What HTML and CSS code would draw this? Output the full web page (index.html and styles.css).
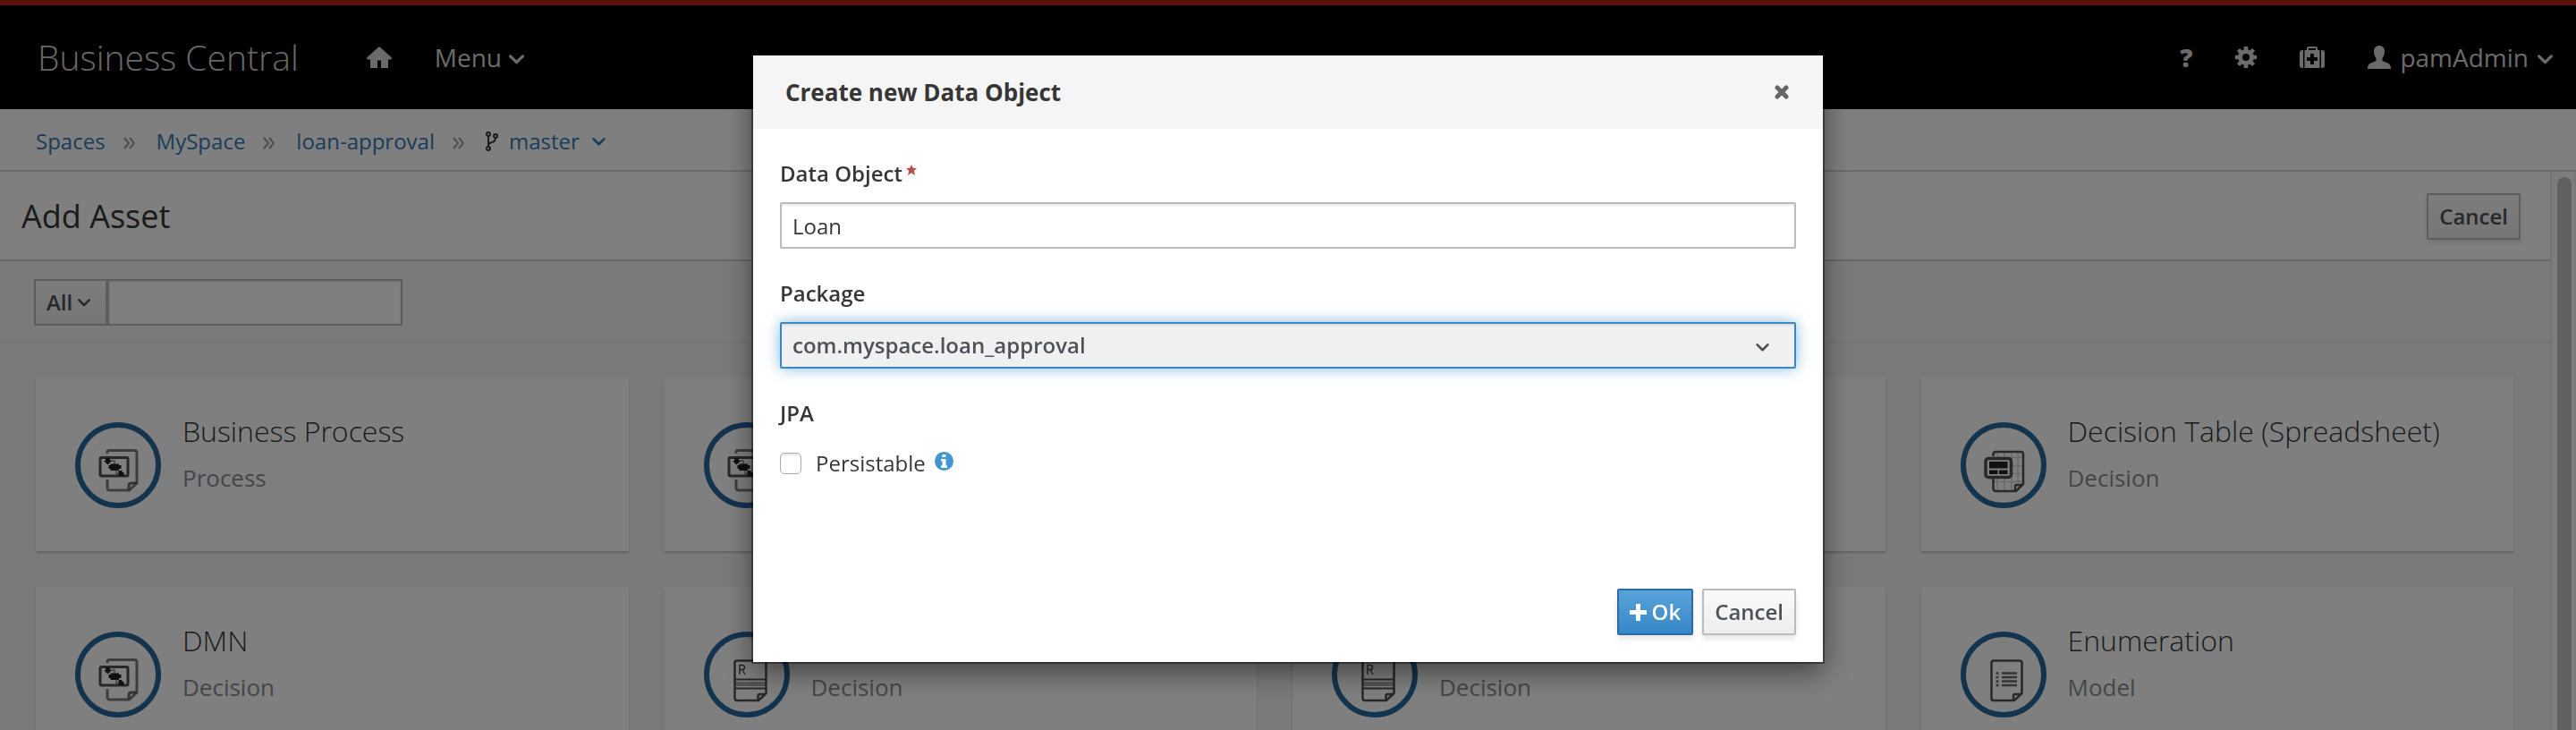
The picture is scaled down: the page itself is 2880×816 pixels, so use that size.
FILE: index.html
```html
<!DOCTYPE html>
<html lang="en">
<head>
<meta charset="utf-8">
<title>Business Central</title>
<link rel="stylesheet" href="styles.css">
</head>
<body>
<svg class="sprite" aria-hidden="true">
  <symbol id="chevron" viewBox="0 0 16 10"><path d="M1.500 1.500 8 8 14.500 1.500" fill="none" stroke="currentColor" stroke-width="3" stroke-linecap="round" stroke-linejoin="round"/></symbol>
  <symbol id="raquo" viewBox="0 0 13 14"><path d="M1 1 6 7 1 13M7 1 12 7 7 13" fill="none" stroke="currentColor" stroke-width="2"/></symbol>
  <symbol id="process" viewBox="0 0 48 52">
    <g fill="none" stroke="currentColor" stroke-width="3">
      <path d="M12 7V5.500Q12 3.500 14 3.500H42Q45 3.500 45 6V40L36.500 48H15Q12 48 12 45V36" opacity=".75"/>
      <rect x="4" y="11.500" width="31" height="20.500" rx="1.500"/>
      <path d="M36 47V43Q36 40 39 40H45" opacity=".85"/>
      <path d="M12 15H20V19M22 25V29.500H27" stroke-width="1.500" opacity=".7"/>
    </g>
    <path fill="#222" d="M10 12h5v3h2l-4.500 4.500L8 15h2zM13.500 20h2v-1.500H25V20h2.500v4H25v2h-9.500v-2h-2zM24.500 26h4v2h2v4h-6z"/>
  </symbol>
  <symbol id="sheet" viewBox="0 0 48 52">
    <path d="M11 11.500H45M11 20.500H45M11 29.500H45M11 38.500H45M17 4V48M25 4V48M33 4V48M40 4V40" fill="none" stroke="currentColor" stroke-width="1.500" opacity=".25"/>
    <path d="M12.500 10V8Q12.500 5 15.500 5H43Q46 5 46 8V41L38 49H15.500Q12.500 49 12.500 46V35" fill="none" stroke="currentColor" stroke-width="2.500"/>
    <path d="M37 48V44Q37 42 39 42H45" fill="none" stroke="currentColor" stroke-width="2.500"/>
    <rect x="4" y="12.500" width="28.500" height="21" rx="3" fill="#fff" stroke="currentColor" stroke-width="3.500"/>
    <path fill="#222" d="M8 16h20.500v7.500H8zM8 25.500h9.500v4.500H8zM19 25.500h9.500v4.500H19z"/>
  </symbol>
  <symbol id="rule" viewBox="0 0 48 52">
    <g fill="none" stroke="currentColor" stroke-width="2.500">
      <path d="M37 49H13Q10.500 49 10.500 46.500V7Q10.500 4.500 13 4.500H43Q45.500 4.500 45.500 7V41Z"/>
      <path d="M36.500 48V44Q36.500 42 38.500 42H45"/>
      <path d="M11 25.500H45M11 35.500H45" stroke-width="2"/>
      <path d="M11 30.500H45" stroke-width="5" opacity=".5"/>
      <path d="M16 20V9.500H19Q21.500 9.500 21.500 12Q21.500 14.500 19 14.500H16M19 14.500 22 20" stroke-width="1.500"/>
    </g>
  </symbol>
  <symbol id="enum" viewBox="0 0 48 52">
    <g fill="none" stroke="currentColor" stroke-width="2.500">
      <path d="M36 49H12.500Q10.500 49 10.500 46.500V7Q10.500 4.500 13 4.500H41.500Q44.500 4.500 44.500 7V41Z"/>
      <path d="M35 48V44Q35 42 37 42H44"/>
      <path d="M22 18.500H39M22 23H39M22 27.500H39M22 32H39" stroke-width="2.500" opacity=".85"/>
      <path d="M15.500 18.500H18.500M15.500 23H18.500M15.500 27.500H18.500M15.500 32H18.500" stroke-width="2.500" opacity=".85"/>
    </g>
  </symbol>
</svg>

<header class="masthead">
  <a class="brand" href="#">Business Central</a>
  <nav class="masthead-nav">
    <button class="nav-btn" aria-label="Home"><svg width="28" height="24" viewBox="0 0 28 24"><path fill="currentColor" d="M14 0 28 12.500 27 14.500H24V24H16V15.500H12V24H4V14.500H1L0 12.500Z"/></svg></button>
    <button class="nav-btn">Menu<svg class="caret" width="17" height="11"><use href="#chevron"/></svg></button>
  </nav>
  <div class="masthead-tools">
    <button class="nav-btn help" aria-label="Help">?</button>
    <button class="nav-btn" aria-label="Settings"><svg width="24" height="24" viewBox="0 0 24 24"><circle cx="12" cy="12" r="6.500" fill="none" stroke="currentColor" stroke-width="5"/><path d="M12 0V5M12 19V24M0 12H5M19 12H24M3.500 3.500 7 7M17 17 20.500 20.500M3.500 20.500 7 17M17 7 20.500 3.500" stroke="currentColor" stroke-width="4.500"/></svg></button>
    <button class="nav-btn" aria-label="Support"><svg width="28" height="24" viewBox="0 0 28 24"><path fill="currentColor" fill-rule="evenodd" d="M3 4H4V24H3Q0 24 0 21V7Q0 4 3 4ZM25 4H24V24H25Q28 24 28 21V7Q28 4 25 4ZM5.500 4H8V2Q8 0 10 0H18Q20 0 20 2V4H22.500V24H5.500ZM10 4H18V2H10ZM12 8V12H8V16H12V20H16V16H20V12H16V8Z"/></svg></button>
    <button class="nav-btn user"><svg width="26" height="26" viewBox="0 0 26 26"><path fill="currentColor" d="M13 0C17 0 19 3 19 7c0 3-1.200 5-2.500 7v3l6 2.500Q26 21 26 26H0q0-5 3.500-6.500L9.500 17v-3C8.200 12 7 10 7 7c0-4 2-7 6-7"/></svg>pamAdmin<svg class="caret" width="17" height="11"><use href="#chevron"/></svg></button>
  </div>
</header>

<nav class="crumbs" aria-label="Breadcrumb">
  <a href="#">Spaces</a><svg class="sep" width="13" height="14"><use href="#raquo"/></svg>
  <a href="#">MySpace</a><svg class="sep" width="13" height="14"><use href="#raquo"/></svg>
  <a href="#">loan-approval</a><svg class="sep" width="13" height="14"><use href="#raquo"/></svg>
  <svg class="branch" width="14" height="22" viewBox="0 0 14 22"><g fill="none" stroke="currentColor" stroke-width="2"><circle cx="3" cy="3" r="2"/><circle cx="3" cy="19" r="2"/><circle cx="11" cy="5" r="2"/><path d="M3 5V17M11 7Q11 11 7 12 3 13 3 16"/></g></svg>
  <a href="#" class="branch-link">master<svg width="15" height="9"><use href="#chevron"/></svg></a>
</nav>

<div class="workspace">
  <main class="content">
    <div class="titlebar">
      <h1>Add Asset</h1>
      <button class="btn">Cancel</button>
    </div>
    <div class="toolbar">
      <button class="filter">All<svg width="14" height="9"><use href="#chevron"/></svg></button>
      <input class="search" type="text" aria-label="Filter assets">
    </div>
    <section class="cards">
      <article class="card"><span class="ring"><svg width="48" height="52"><use href="#process"/></svg></span><div><h2>Business Process</h2><p>Process</p></div></article>
      <article class="card"><span class="ring"><svg width="48" height="52"><use href="#process"/></svg></span></article>
      <article class="card"></article>
      <article class="card"><span class="ring"><svg width="48" height="52"><use href="#sheet"/></svg></span><div><h2>Decision Table (Spreadsheet)</h2><p>Decision</p></div></article>
      <article class="card"><span class="ring"><svg width="48" height="52"><use href="#process"/></svg></span><div><h2>DMN</h2><p>Decision</p></div></article>
      <article class="card"><span class="ring"><svg width="48" height="52"><use href="#rule"/></svg></span><div><h2>&nbsp;</h2><p>Decision</p></div></article>
      <article class="card"><span class="ring"><svg width="48" height="52"><use href="#rule"/></svg></span><div><h2>&nbsp;</h2><p>Decision</p></div></article>
      <article class="card"><span class="ring"><svg width="48" height="52"><use href="#enum"/></svg></span><div><h2>Enumeration</h2><p>Model</p></div></article>
    </section>
  </main>
  <div class="scrollbar"><div class="thumb"></div></div>
</div>

<div class="backdrop">
  <section class="modal" role="dialog" aria-labelledby="dlg-title">
    <header class="modal-head">
      <h2 id="dlg-title">Create new Data Object</h2>
      <button class="close" aria-label="Close"><svg width="16" height="16" viewBox="0 0 16 16"><path d="M3 3 13 13M13 3 3 13" stroke="currentColor" stroke-width="5" stroke-linecap="round"/></svg></button>
    </header>
    <form class="modal-body">
      <div class="field">
        <label for="name">Data Object<svg class="required" width="12" height="12" viewBox="0 0 12 12"><path fill="currentColor" d="M6 0 7.800 3.800 12 4 8.800 7 10 12 6 9.300 2 12 3.200 7 0 4 4.200 3.800Z"/></svg></label>
        <input id="name" type="text" value="Loan">
      </div>
      <div class="field">
        <label for="package">Package</label>
        <div class="select">
          <select id="package"><option>com.myspace.loan_approval</option></select>
          <svg width="15" height="9"><use href="#chevron"/></svg>
        </div>
      </div>
      <fieldset>
        <legend>JPA</legend>
        <div class="check">
          <input type="checkbox" id="persist"><label for="persist">Persistable</label>
          <svg class="info" width="21" height="21" viewBox="0 0 21 21"><circle cx="10.500" cy="10.500" r="10.500" fill="#4297d0"/><path fill="#fff" d="M8.500 3h4v3h-4zM7 8h5.500v7.500H14V18H7v-2.500h1.500v-5H7z"/></svg>
        </div>
      </fieldset>
    </form>
    <footer class="modal-foot">
      <button class="btn primary"><svg width="19" height="19" viewBox="0 0 19 19"><path fill="currentColor" d="M7 0h5v7h7v5h-7v7H7v-7H0V7h7z"/></svg>Ok</button>
      <button class="btn">Cancel</button>
    </footer>
  </section>
</div>
</body>
</html>
```
FILE: styles.css
```css
* { box-sizing: border-box; }

body {
  margin: 0;
  height: 100vh;
  display: flex;
  flex-direction: column;
  overflow: hidden;
  background: #fff;
  color: #363636;
  font: 24px/40px "Open Sans", "Noto Sans", sans-serif;
}

button, input, select { font: inherit; color: inherit; }
button { margin: 0; cursor: pointer; }
h1, h2, p { margin: 0; font-weight: 400; }
a { color: #3678b4; text-decoration: none; }
svg { flex: none; }
.sprite { display: none; }

/* Masthead */
.masthead {
  flex: none;
  display: flex;
  align-items: center;
  height: 122px;
  padding: 0 26px 0 42px;
  border-top: 6px solid #bb2518;
  background: #000;
  color: #d6d6d6;
}
.brand { color: #d1d1d1; font-size: 39px; font-weight: 300; }
.masthead-nav { display: flex; gap: 48px; margin-left: 76px; }
.masthead-tools { display: flex; gap: 48px; margin-left: auto; }
.nav-btn {
  display: flex;
  align-items: center;
  gap: 8px;
  padding: 0;
  border: 0;
  background: none;
  font-size: 28px;
}
.caret { margin-top: 4px; }
.help { font-weight: 800; }
.user { gap: 10px; }

/* Breadcrumb */
.crumbs {
  flex: none;
  display: flex;
  align-items: center;
  height: 70px;
  padding: 4px 40px 0;
  border-bottom: 2px solid #d6d6d6;
}
.sep { margin: 4px 24px 0 20px; color: #9c9c9c; }
.branch { margin-right: 12px; }
.branch-link { display: flex; align-items: center; gap: 14px; }

/* Workspace */
.workspace { flex: 1; min-height: 0; display: flex; }
.content { flex: 1; min-width: 0; background: #f5f5f5; overflow: hidden; }
.titlebar {
  display: flex;
  align-items: center;
  justify-content: space-between;
  height: 100px;
  padding: 2px 33px 0 24px;
  border-bottom: 2px solid #cfcfcf;
  background: #fff;
}
h1 { font-size: 36px; }
.toolbar { display: flex; padding: 20px 38px 18px; border-bottom: 2px solid #ededed; }
.filter, .search { height: 52px; border: 2px solid #bbb; }
.filter {
  display: flex;
  align-items: center;
  gap: 6px;
  width: 82px;
  padding: 0 12px;
  background: linear-gradient(#fafafa, #ededed);
  color: #4d5258;
  font-weight: 600;
}
.search { width: 330px; background: #fff; box-shadow: inset 0 2px 2px rgba(3, 3, 3, .075); }
.scrollbar {
  flex: none;
  width: 29px;
  padding: 6px 6px 0;
  border-left: 2px solid #e8e8e8;
  border-right: 2px solid #f0f0f0;
  background: #fafafa;
}
.thumb { width: 16px; height: 100%; border-radius: 8px 8px 0 0; background: #c1c1c1; }

/* Asset cards */
.cards { display: grid; grid-template-columns: repeat(4, 1fr); gap: 40px; padding: 38px 41px 0 40px; }
.card {
  display: flex;
  align-items: center;
  gap: 24px;
  height: 194px;
  padding: 2px 44px 0;
  background: #fff;
  box-shadow: 0 2px 2px rgba(3, 3, 3, .2);
}
.ring {
  flex: none;
  display: grid;
  place-items: center;
  width: 96px;
  height: 96px;
  padding-top: 12px;
  border: 6px solid #28689c;
  border-radius: 50%;
  color: #505050;
}
.card h2 { font-size: 32px; font-weight: 300; line-height: 52px; }
.card p { font-size: 26px; line-height: 52px; color: #8b8d8f; }
.card div { padding-bottom: 24px; }

/* Buttons */
.btn {
  display: flex;
  align-items: center;
  gap: 6px;
  height: 52px;
  padding: 0 12px;
  border: 2px solid #bbb;
  border-radius: 2px;
  background: linear-gradient(#fafafa, #ededed);
  box-shadow: 0 4px 6px rgba(3, 3, 3, .1);
  color: #4d5258;
  font-weight: 600;
}
.primary { border-color: #2a6ba4; background: linear-gradient(#58a3d9, #3787c8); color: #fff; }

/* Dialog */
.backdrop {
  position: fixed;
  inset: 0;
  display: flex;
  justify-content: center;
  align-items: flex-start;
  padding-top: 62px;
  background: rgba(0, 0, 0, .5);
}
.modal {
  width: 1196px;
  background: #fff;
  box-shadow: 0 0 0 2px rgba(0, 0, 0, .4), 0 10px 30px rgba(0, 0, 0, .5);
}
.modal-head {
  display: flex;
  align-items: center;
  justify-content: space-between;
  height: 82px;
  padding: 0 38px 0 36px;
  background: #f5f5f5;
}
.modal-head h2 { font-size: 26px; font-weight: 700; }
.close { display: flex; padding: 0; border: 0; background: none; color: #666; }
.modal-body { display: flex; flex-direction: column; gap: 32px; padding: 32px 30px 0; }
.field { display: flex; flex-direction: column; gap: 14px; }
.field label, legend { padding: 0; font-weight: 600; line-height: 36px; }
.required { margin-left: 4px; vertical-align: 7px; color: #b5524c; }
.field input, .select select {
  width: 100%;
  height: 52px;
  padding: 0 12px;
  border: 2px solid #bbb;
  border-radius: 2px;
  background: #fff;
  box-shadow: inset 0 2px 2px rgba(3, 3, 3, .075);
}
.select { position: relative; color: #4d5258; }
.select select {
  display: block;
  appearance: none;
  border-color: #3787c8;
  background: #f0f0f0;
  box-shadow: inset 0 2px 2px rgba(3, 3, 3, .075), 0 0 16px rgba(55, 135, 200, .6);
  font-weight: 600;
}
.select svg { position: absolute; right: 30px; top: 24px; pointer-events: none; }
fieldset { margin: 0; padding: 0; border: 0; }
.check { display: flex; align-items: center; margin-top: 18px; }
.check input {
  appearance: none;
  width: 24px;
  height: 24px;
  margin: 0 16px 0 0;
  border: 1px solid #aaa;
  border-radius: 5px;
  background: #fff;
  box-shadow: inset 0 2px 2px rgba(3, 3, 3, .1);
}
.info { margin: 0 0 6px 10px; }
.modal-foot { display: flex; justify-content: flex-end; gap: 10px; padding: 120px 30px 30px; }
```
